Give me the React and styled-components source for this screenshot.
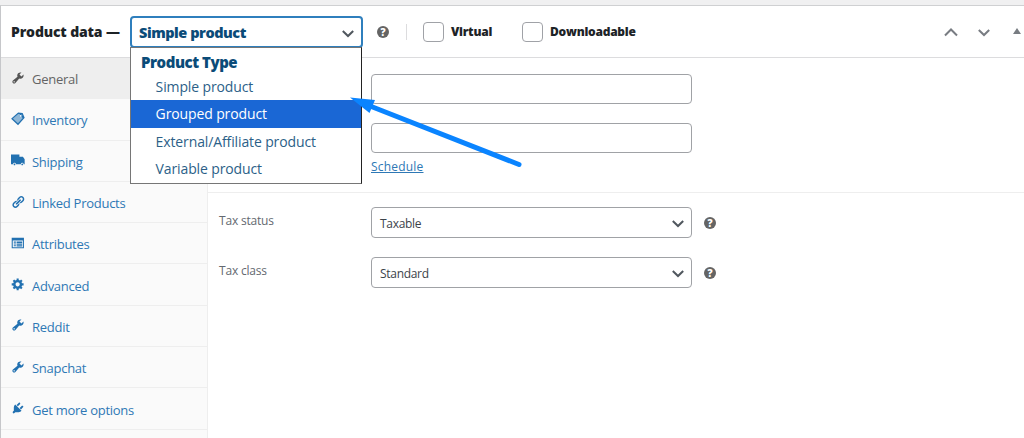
import React from "react";
import styled, { createGlobalStyle } from "styled-components";

const GlobalStyle = createGlobalStyle`
  * {
    box-sizing: border-box;
  }
  body {
    margin: 0;
    overflow: hidden;
    background: #f0f0f1;
    font-family: "Open Sans", "Noto Sans", sans-serif;
  }
`;

const Page = styled.div`
  position: relative;
  width: 1024px;
  height: 438px;
  padding-top: 5px;
  overflow: hidden;
`;

const Panel = styled.section`
  display: flex;
  flex-direction: column;
  height: 433px;
  background: #fff;
  border-top: 1px solid #cfd0d2;
  border-left: 1px solid #c6c7ca;
`;

const Header = styled.header`
  display: flex;
  align-items: center;
  height: 52px;
  padding-left: 10px;
  border-bottom: 1px solid #dcdcde;
`;

const Heading = styled.h2`
  width: 119px;
  margin: 0;
  padding-bottom: 1px;
  font-size: 14px;
  font-weight: 800;
  letter-spacing: -0.15px;
  white-space: nowrap;
  color: #1d2327;
`;

const TypeSelect = styled.div`
  position: relative;
  flex: none;
  width: 233px;
  height: 32px;
  border: 2px solid #2f7fbd;
  border-radius: 4px;
`;

const TypeValue = styled.div`
  display: flex;
  align-items: center;
  justify-content: space-between;
  height: 29px;
  padding: 1px 6px 0 7px;
  font-size: 14.5px;
  font-weight: 800;
  letter-spacing: -0.45px;
  color: #0a4b78;
`;

const Menu = styled.div`
  position: absolute;
  z-index: 2;
  top: 29px;
  left: -2px;
  width: 232px;
  height: 137px;
  background: #fff;
  border: 1px solid #767676;
  border-right: 1px solid #222;
`;

const MenuGroup = styled.div`
  height: 25px;
  padding-left: 10px;
  font-size: 15px;
  font-weight: 800;
  line-height: 29px;
  letter-spacing: -0.45px;
  color: #0a4b78;
`;

const MenuItem = styled.div`
  height: 27.5px;
  padding-left: 24.6px;
  font-size: 14px;
  line-height: 27px;
  letter-spacing: -0.12px;
  background: ${({ $active }) => ($active ? "#1a67d5" : "transparent")};
  color: ${({ $active }) => ($active ? "#fff" : "#2c5f88")};
`;

const HelpTip = styled.span`
  display: flex;
  align-items: center;
  justify-content: center;
  flex: none;
  width: 12px;
  height: 12px;
  margin-left: ${({ $gap }) => $gap}px;
  border-radius: 50%;
  background: #646464;
  color: #fff;
  font-size: 10px;
  font-weight: 800;
  line-height: 12px;
`;

const Divider = styled.span`
  width: 1px;
  height: 16px;
  margin: 0 17px 0 17px;
  background: #dcdcde;
`;

const CheckLabel = styled.label`
  display: flex;
  align-items: center;
  width: ${({ $width }) => $width}px;
  font-size: 12px;
  font-weight: 800;
  letter-spacing: -0.25px;
  color: #1d2327;
`;

const Checkbox = styled.span`
  flex: none;
  width: 21px;
  height: 20px;
  margin: 0 7px 0 -1px;
  border: 1px solid #a0a2a7;
  border-radius: 4px;
  background: #fff;
`;

const HandleActions = styled.div`
  display: flex;
  align-items: center;
  gap: 19px;
  margin-left: auto;
  color: #787c82;
`;

const Toggle = styled.span`
  width: 0;
  height: 0;
  margin: -1px 3px 0 3px;
  border: 4px solid transparent;
  border-top: 0;
  border-bottom: 6px solid #787c82;
`;

const Body = styled.div`
  display: flex;
  flex: 1;
  min-height: 0;
`;

const Tabs = styled.ul`
  width: 207px;
  margin: 0;
  padding: 0;
  list-style: none;
  overflow: hidden;
  background: #fafafa;
  border-right: 1px solid #eee;
`;

const Tab = styled.li`
  display: flex;
  align-items: center;
  height: 41.3px;
  padding: 2px 0 0 10px;
  border-bottom: 1px solid #eee;
  background: ${({ $active }) => ($active ? "#eee" : "transparent")};
  color: ${({ $active }) => ($active ? "#646464" : "#2e78b5")};
  font-size: 13px;
  letter-spacing: -0.27px;

  svg {
    flex: none;
    width: 14px;
    height: 14px;
    margin: -3px 7px 0 0;
    color: ${({ $active }) => ($active ? "#555" : "#2271b1")};
  }
`;

const Options = styled.div`
  flex: 1;
`;

const Group = styled.div`
  height: ${({ $height }) => $height}px;
  padding-top: ${({ $top }) => $top}px;
  border-bottom: ${({ $last }) => ($last ? "0" : "1px solid #eee")};
`;

const Field = styled.div`
  display: flex;
  align-items: center;
  height: 31px;
  margin-bottom: 19px;
`;

const PriceField = styled(Field)`
  height: 30px;
  margin-bottom: ${({ $gap }) => $gap}px;
  padding-left: 163px;
`;

const Label = styled.span`
  width: 163px;
  padding: 0 0 5px 11px;
  font-size: 12px;
  letter-spacing: -0.2px;
  color: #646970;
`;

const Input = styled.div`
  width: 321px;
  height: 30px;
  border: 1px solid #a0a2a6;
  border-radius: 4px;
`;

const Select = styled(Input)`
  display: flex;
  align-items: center;
  justify-content: space-between;
  height: 31px;
  padding: 1px 6px 0 8px;
  font-size: 12px;
  letter-spacing: -0.3px;
  color: #3c434a;
`;

const Schedule = styled.a`
  display: block;
  margin-left: 163px;
  padding-top: 1px;
  font-size: 12px;
  line-height: 18px;
  letter-spacing: 0.2px;
  text-decoration: underline;
  color: #2e78b5;
`;

const Pointer = styled.svg`
  position: absolute;
  z-index: 3;
  top: 90px;
  left: 345px;
`;

const Chevron = ({ up, color = "#50575e" }) => (
  <svg width="14" height="14" viewBox="0 0 14 14" fill="none" stroke={color} strokeWidth="2">
    <path d={up ? "M1 10.500l6-6 6 6" : "M1.800 5l5.200 5 5.200-5"} />
  </svg>
);

const Icon = ({ children }) => (
  <svg viewBox="0 0 20 20" fill="currentColor" fillRule="evenodd">
    {children}
  </svg>
);

const icons = {
  wrench: (
    <path d="M16.68 9.77c-1.34 1.34-3.3 1.67-4.95.99l-5.41 6.52c-.99.99-2.59.99-3.58 0s-.99-2.59 0-3.57l6.52-5.42c-.68-1.65-.35-3.61.99-4.95 1.28-1.28 3.12-1.62 4.72-1.06l-2.89 2.89 2.82 2.82 2.86-2.87c.53 1.58.18 3.39-1.08 4.65zM3.81 16.21c.4.39 1.04.39 1.43 0 .4-.4.4-1.04 0-1.43-.39-.4-1.03-.4-1.43 0-.39.39-.39 1.03 0 1.43z" />
  ),
  tag: (
    <>
      <path d="M1.500 9.500L10.500 1.500l5.500.7 2.500 5.800-8.500 9.500z" opacity=".5" />
      <path d="M1.500 9.500L10.500 1.500l5.500.7 2.500 5.800-8.500 9.500zM12.500 2l5 6.500" fill="none" stroke="currentColor" strokeWidth="1.800" />
      <circle cx="14" cy="5.500" r="1.200" fill="#fff" />
    </>
  ),
  truck: (
    <path d="M0 2h12v3.500h5l2.500 3.500V16H18a2 2 0 0 0-4 0H7a2 2 0 0 0-4 0H0zM3.800 16.300a1.200 1.200 0 1 0 2.400 0 1.200 1.200 0 0 0-2.400 0zM14.800 16.300a1.200 1.200 0 1 0 2.400 0 1.200 1.200 0 0 0-2.400 0z" />
  ),
  link: (
    <path d="M17.74 2.76c1.68 1.69 1.68 4.41 0 6.1l-1.53 1.52c-1.12 1.12-2.7 1.47-4.14 1.09l2.62-2.61.76-.77.76-.76c.84-.84.84-2.2 0-3.04-.84-.85-2.2-.85-3.04 0l-.77.76-3.38 3.38c-.37-1.44-.02-3.02 1.1-4.14l1.52-1.53c1.69-1.68 4.42-1.68 6.1 0zM8.59 13.43l5.34-5.34c.42-.42.42-1.1 0-1.52-.44-.43-1.13-.39-1.53 0l-5.33 5.34c-.42.42-.42 1.1 0 1.52.44.43 1.13.39 1.52 0zm-.76 2.29l4.14-4.15c.38 1.44.03 3.02-1.09 4.14l-1.52 1.53c-1.69 1.68-4.41 1.68-6.1 0-1.68-1.68-1.68-4.42 0-6.1l1.53-1.52c1.12-1.12 2.7-1.47 4.14-1.1l-4.14 4.15c-.85.84-.85 2.2 0 3.05.84.84 2.2.84 3.04 0z" />
  ),
  list: (
    <path d="M1 2.500h17.500v15H1zM2.500 6.500V16h14.500V6.500zM4 8h3v1.500H4zM8 8h8v2H8zM4 10.700h3v1.500H4zM8 10.700h8v1.800H8zM4 13.300h3v1.500H4zM8 13.300h8V15H8z" />
  ),
  gear: (
    <path d="M18 12h-2.18c-.17.7-.44 1.35-.81 1.93l1.54 1.54-2.1 2.1-1.54-1.54c-.58.36-1.23.63-1.91.79V19H8v-2.18c-.68-.16-1.33-.43-1.91-.79l-1.54 1.54-2.12-2.12 1.54-1.54c-.36-.58-.63-1.23-.79-1.91H1V9.03h2.17c.16-.7.44-1.35.8-1.94L2.43 5.55l2.1-2.1 1.54 1.54c.58-.37 1.24-.64 1.93-.81V2h3v2.18c.68.16 1.33.43 1.91.79l1.54-1.54 2.12 2.12-1.54 1.54c.36.59.64 1.24.8 1.94H18V12zm-8.5 1.5c1.66 0 3-1.34 3-3s-1.34-3-3-3-3 1.34-3 3 1.34 3 3 3z" />
  ),
  plug: (
    <path d="M13.11 4.36L9.87 7.6 8 5.73l3.24-3.24c.35-.34 1.05-.2 1.56.32.52.51.66 1.21.31 1.55zm-8 1.77l.91-1.12 9.01 9.01-1.19.84c-.71.71-2.63 1.16-3.82 1.16H6.14L4.9 17.26c-.59.59-1.54.59-2.12 0-.59-.58-.59-1.53 0-2.12l1.24-1.24v-3.88c0-1.13.4-3.19 1.09-3.89zm7.26 3.97l3.24-3.24c.34-.35 1.04-.21 1.55.31.52.51.66 1.21.31 1.55l-3.24 3.25z" />
  ),
};

const tabs = [
  { label: "General", icon: "wrench", active: true },
  { label: "Inventory", icon: "tag" },
  { label: "Shipping", icon: "truck" },
  { label: "Linked Products", icon: "link" },
  { label: "Attributes", icon: "list" },
  { label: "Advanced", icon: "gear" },
  { label: "Reddit", icon: "wrench" },
  { label: "Snapchat", icon: "wrench" },
  { label: "Get more options", icon: "plug" },
];

const productTypes = ["Simple product", "Grouped product", "External/Affiliate product", "Variable product"];

const App = () => {
  return (
    <Page>
      <GlobalStyle />
      <Panel>
        <Header>
          <Heading>Product data —</Heading>
          <TypeSelect>
            <TypeValue>
              Simple product
              <Chevron />
            </TypeValue>
            <Menu>
              <MenuGroup>Product Type</MenuGroup>
              {productTypes.map((type) => (
                <MenuItem key={type} $active={type === "Grouped product"}>
                  {type}
                </MenuItem>
              ))}
            </Menu>
          </TypeSelect>
          <HelpTip $gap={14}>?</HelpTip>
          <Divider />
          <CheckLabel $width={99}>
            <Checkbox />
            Virtual
          </CheckLabel>
          <CheckLabel $width={120}>
            <Checkbox />
            Downloadable
          </CheckLabel>
          <HandleActions>
            <Chevron up color="#787c82" />
            <Chevron color="#787c82" />
            <Toggle />
          </HandleActions>
        </Header>
        <Body>
          <Tabs>
            {tabs.map((tab) => (
              <Tab key={tab.label} $active={tab.active}>
                <Icon>{icons[tab.icon]}</Icon>
                {tab.label}
              </Tab>
            ))}
          </Tabs>
          <Options>
            <Group $height={135} $top={16}>
              <PriceField $gap={19}>
                <Input />
              </PriceField>
              <PriceField $gap={4}>
                <Input />
              </PriceField>
              <Schedule>Schedule</Schedule>
            </Group>
            <Group $height={240} $top={14} $last>
              <Field>
                <Label>Tax status</Label>
                <Select>
                  Taxable
                  <Chevron />
                </Select>
                <HelpTip $gap={12}>?</HelpTip>
              </Field>
              <Field>
                <Label>Tax class</Label>
                <Select>
                  Standard
                  <Chevron />
                </Select>
                <HelpTip $gap={12}>?</HelpTip>
              </Field>
            </Group>
          </Options>
        </Body>
      </Panel>
      <Pointer width="180" height="80" viewBox="345 90 180 80">
        <path d="M370 106L519 164.500" stroke="#0a84ff" strokeWidth="5" strokeLinecap="round" />
        <path d="M350 97.500L375 100L369.500 113z" fill="#0a84ff" />
      </Pointer>
    </Page>
  );
};

export default App;
